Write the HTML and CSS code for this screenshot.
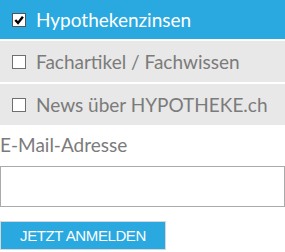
FILE: index.html
```html
<!DOCTYPE html>
<html lang="de">
<head>
<meta charset="utf-8">
<link rel="stylesheet" href="styles.css">
</head>
<body>
<form class="signup">
  <ul class="topics">
    <li class="topic topic--active"><span class="box box--checked"><svg viewBox="0 0 12 12" width="12" height="12"><path d="M2.3 6 L5 8.9 L9.9 2.7" fill="none" stroke="#000" stroke-width="2.4"/></svg></span><span class="topic-label">Hypothekenzinsen</span></li>
    <li class="topic"><span class="box"></span><span class="topic-label">Fachartikel / Fachwissen</span></li>
    <li class="topic"><span class="box"></span><span class="topic-label">News über HYPOTHEKE.ch</span></li>
  </ul>
  <label class="field-label">E-Mail-Adresse</label>
  <div class="field"></div>
  <button class="submit" type="button">JETZT ANMELDEN</button>
</form>
</body>
</html>
```

FILE: styles.css
```css
html, body {
  margin: 0;
  padding: 0;
  background: #fff;
}
.signup {
  display: flex;
  flex-direction: column;
  width: 285px;
  font-family: "Lato", "Open Sans", sans-serif;
}
.topics {
  list-style: none;
  margin: 0;
  padding: 0;
  display: flex;
  flex-direction: column;
  gap: 2px;
}
.topic {
  height: 41px;
  display: flex;
  align-items: center;
  padding-left: 12px;
  gap: 10px;
  background: #e8e8e8;
  color: #7b7b7b;
  font-size: 19px;
}
.topic--active {
  height: 39px;
  background: #29a9e0;
  color: #fff;
}
.box {
  width: 12px;
  height: 12px;
  border: 1px solid #6f6f6f;
  background: #fff;
  flex: none;
  display: flex;
}
.box--checked {
  border-color: #555;
}
.topic-label {
  line-height: 1;
}
.field-label {
  margin-top: 9px;
  font-size: 19px;
  color: #7b7b7b;
  line-height: 22px;
}
.field {
  margin-top: 10px;
  height: 39px;
  border: 1px solid #aaa;
}
.submit {
  margin-top: 14px;
  width: 166px;
  height: 29px;
  padding: 0;
  border: 1px solid #d8d8d8;
  background: #29a9e0;
  color: #fff;
  font-family: "Liberation Sans", Arial, sans-serif;
  font-size: 15px;
  letter-spacing: -0.4px;
  text-align: center;
}
```
